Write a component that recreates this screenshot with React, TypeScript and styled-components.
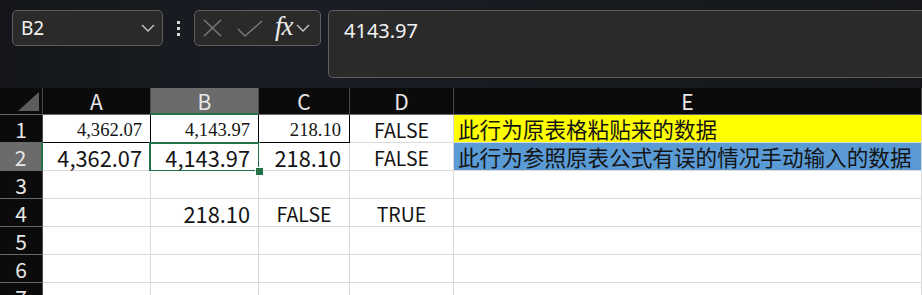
import React from "react";
import styled, { createGlobalStyle, css } from "styled-components";

const GlobalStyle = createGlobalStyle`
  html, body {
    margin: 0;
    padding: 0;
    background: #ffffff;
    overflow: hidden;
  }
  * {
    box-sizing: border-box;
  }
`;

const SANS = `"Noto Sans CJK SC", "Noto Sans", sans-serif`;
const UI = `"Noto Sans", "Liberation Sans", sans-serif`;
const SERIF = `"Liberation Serif", "Times New Roman", serif`;

const GREEN = "#217346";
const GRID = "#dadada";

const Page = styled.div`
  width: 922px;
  height: 295px;
  overflow: hidden;
`;

/* ---------- formula bar ---------- */

const TopBar = styled.div`
  height: 88px;
  display: flex;
  align-items: flex-start;
  padding: 10px 0 0 12px;
  background: linear-gradient(90deg, #14161b 0%, #1a1d23 30%, #15171c 100%);
`;

const Box = styled.div`
  height: 36px;
  display: flex;
  align-items: center;
  background: #2a2a2a;
  border: 1px solid #5e5e5e;
  border-radius: 5px;
`;

const NameBox = styled(Box)`
  width: 151px;
  padding: 0 7px 0 8px;
  justify-content: space-between;
  color: #f2f2f2;
  font: 19px ${UI};
`;

const Kebab = styled.div`
  width: 31px;
  height: 36px;
  display: flex;
  flex-direction: column;
  align-items: center;
  justify-content: center;
  gap: 3px;

  span {
    width: 3px;
    height: 3px;
    background: #d8d8d8;
  }
`;

const FxBox = styled(Box)`
  width: 127px;
  padding: 0 0 0 8px;
`;

const Fx = styled.span`
  font-family: ${SERIF};
  font-style: italic;
  font-weight: 400;
  font-size: 27px;
  line-height: 1;
  color: #ececec;
  margin: -3px 3px 0 12px;
  letter-spacing: -1px;
`;

const FormulaBox = styled(Box)`
  margin-left: 7px;
  flex: 1 0 auto;
  height: 68px;
  align-items: flex-start;
  padding: 6px 0 0 15px;
  color: #f2f2f2;
  font: 20px ${UI};
  border-right: none;
  border-top-right-radius: 0;
  border-bottom-right-radius: 0;
`;

const Chevron = ({ color = "#c8c8c8" }: { color?: string }) => (
  <svg width="14" height="8" viewBox="0 0 14 8" fill="none">
    <path d="M1 1l6 6 6-6" stroke={color} strokeWidth="1.3" />
  </svg>
);

/* ---------- sheet ---------- */

const Sheet = styled.div`
  display: grid;
  grid-template-columns: 43px 108px 108px 91px 104px 468px;
  grid-template-rows: 27px;
  grid-auto-rows: 28px;
`;

const HeadCell = styled.div<{ $active?: boolean; $row?: boolean }>`
  display: flex;
  align-items: center;
  justify-content: center;
  padding-top: 1px;
  background: ${({ $active }) => ($active ? "#6b6b6b" : "#0b0b0b")};
  color: #e8e8e8;
  font-family: ${SANS};
  font-size: 21px;
  font-weight: 400;
  line-height: 1;
  border-right: 1px solid #4a4a4a;
  border-bottom: 1px solid #6a6a6a;
  ${({ $active, $row }) =>
    $active &&
    ($row
      ? css`
          border-right: 2px solid ${GREEN};
        `
      : css`
          border-bottom: 2px solid ${GREEN};
        `)}
`;

const Corner = styled(HeadCell)`
  position: relative;

  &::after {
    content: "";
    position: absolute;
    right: 3px;
    bottom: 3px;
    border-style: solid;
    border-width: 0 0 19px 21px;
    border-color: transparent transparent #5c5c5c transparent;
  }
`;

type Font = "serif" | "sans" | "cjk" | "bool";

const fonts = {
  serif: css`
    font-family: ${SERIF};
    font-size: 18.6px;
    padding-top: 3px;
  `,
  cjk: css`
    font-family: ${SANS};
    font-size: 21.6px;
  `,
  sans: css`
    font-family: ${SANS};
    font-size: 21.8px;
    padding-top: 2px;
  `,
  bool: css`
    font-family: ${SANS};
    font-size: 19.5px;
    padding-top: 2px;
  `,
};

const Cell = styled.div<{
  $align?: "left" | "right" | "center";
  $font: Font;
  $bg?: string;
  $boxed?: boolean;
  $selected?: boolean;
}>`
  position: relative;
  display: flex;
  align-items: center;
  white-space: nowrap;
  font-weight: 400;
  line-height: 1;
  color: #141414;
  background: ${({ $bg }) => $bg ?? "#ffffff"};
  border-right: 1px solid ${({ $boxed }) => ($boxed ? "#000" : GRID)};
  border-bottom: 1px solid ${({ $boxed }) => ($boxed ? "#000" : GRID)};
  justify-content: ${({ $align }) =>
    $align === "right" ? "flex-end" : $align === "center" ? "center" : "flex-start"};
  padding-left: ${({ $align }) => ($align === "left" ? "4px" : "0")};
  padding-right: ${({ $align }) => ($align === "right" ? "8px" : "0")};
  ${({ $font }) => fonts[$font]}

  ${({ $selected }) =>
    $selected &&
    css`
      &::before {
        content: "";
        position: absolute;
        top: -1px;
        left: -2px;
        right: -2px;
        bottom: -2px;
        border: 2px solid ${GREEN};
        pointer-events: none;
      }
      &::after {
        content: "";
        position: absolute;
        right: -5px;
        bottom: -5px;
        width: 7px;
        height: 7px;
        background: ${GREEN};
        border-left: 1px solid #fff;
        border-top: 1px solid #fff;
        z-index: 2;
      }
    `}
`;

type CellSpec = {
  text?: string;
  align?: "left" | "right" | "center";
  font?: Font;
  bg?: string;
  boxed?: boolean;
  selected?: boolean;
};

const columns = ["A", "B", "C", "D", "E"];
const empty: CellSpec[] = [{}, {}, {}, {}, {}];

const rows: CellSpec[][] = [
  [
    { text: "4,362.07", align: "right", font: "serif", boxed: true },
    { text: "4,143.97", align: "right", font: "serif", boxed: true },
    { text: "218.10", align: "right", font: "serif", boxed: true },
    { text: "FALSE", align: "center", font: "bool" },
    { text: "此行为原表格粘贴来的数据", align: "left", font: "cjk", bg: "#ffff00" },
  ],
  [
    { text: "4,362.07", align: "right" },
    { text: "4,143.97", align: "right", selected: true },
    { text: "218.10", align: "right" },
    { text: "FALSE", align: "center", font: "bool" },
    { text: "此行为参照原表公式有误的情况手动输入的数据", align: "left", font: "cjk", bg: "#5b9bd5" },
  ],
  empty,
  [
    {},
    { text: "218.10", align: "right" },
    { text: "FALSE", align: "center", font: "bool" },
    { text: "TRUE", align: "center", font: "bool" },
    {},
  ],
  empty,
  empty,
  empty,
];

export default function App() {
  return (
    <Page>
      <GlobalStyle />
      <TopBar>
        <NameBox>
          <span>B2</span>
          <Chevron />
        </NameBox>
        <Kebab>
          <span />
          <span />
          <span />
        </Kebab>
        <FxBox>
          <svg width="20" height="18" viewBox="0 0 20 18" fill="none">
            <path d="M1 1l17 16M18 1L1 17" stroke="#7a7a7a" strokeWidth="1.4" />
          </svg>
          <svg width="26" height="17" viewBox="0 0 26 17" fill="none" style={{ marginLeft: 14 }}>
            <path d="M1 9l7 7L25 1" stroke="#7a7a7a" strokeWidth="1.4" />
          </svg>
          <Fx>fx</Fx>
          <Chevron />
        </FxBox>
        <FormulaBox>4143.97</FormulaBox>
      </TopBar>
      <Sheet>
        <Corner />
        {columns.map((c) => (
          <HeadCell key={c} $active={c === "B"}>
            {c}
          </HeadCell>
        ))}
        {rows.map((row, r) => (
          <React.Fragment key={r}>
            <HeadCell $row $active={r === 1}>
              {r + 1}
            </HeadCell>
            {row.map((cell, c) => (
              <Cell
                key={c}
                $align={cell.align}
                $font={cell.font ?? "sans"}
                $bg={cell.bg}
                $boxed={cell.boxed}
                $selected={cell.selected}
              >
                {cell.text}
              </Cell>
            ))}
          </React.Fragment>
        ))}
      </Sheet>
    </Page>
  );
}
